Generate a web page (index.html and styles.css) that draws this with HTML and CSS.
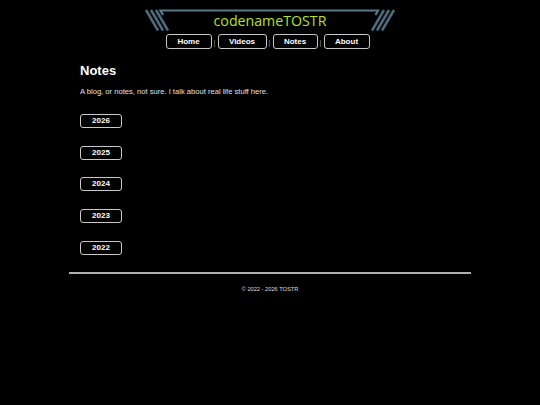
FILE: index.html
```html
<!DOCTYPE html>
<html lang="en">
<head>
<meta charset="utf-8">
<title>Notes - codenameTOSTR</title>
<link rel="stylesheet" href="styles.css">
</head>
<body>
<header class="header">
  <svg class="frame" viewBox="140 0 260 36" width="260" height="36" aria-hidden="true">
    <g stroke="#4e6b7e" stroke-width="2.5" fill="none" stroke-linecap="butt">
      <line x1="146" y1="10" x2="158" y2="30.5"/>
      <line x1="151" y1="10" x2="163" y2="30.5"/>
      <line x1="156" y1="10" x2="168" y2="30.5"/>
      <line x1="394" y1="10" x2="382" y2="30.5"/>
      <line x1="389" y1="10" x2="377" y2="30.5"/>
      <line x1="384" y1="10" x2="372" y2="30.5"/>
      <path d="M163 15 L160.5 10.5 L378 10.5 L375.5 15" stroke="#5a7789" stroke-width="2.2"/>
    </g>
  </svg>
  <div class="title">codenameTOSTR</div>
  <nav class="nav">
    <a class="btn w46" href="#">Home</a>
    <span class="sep">|</span>
    <a class="btn w49" href="#">Videos</a>
    <span class="sep">|</span>
    <a class="btn w45" href="#">Notes</a>
    <span class="sep">|</span>
    <a class="btn w46" href="#">About</a>
  </nav>
</header>
<main class="content">
  <h1 class="heading">Notes</h1>
  <p class="intro">A blog, or notes, not sure. I talk about real life stuff here.</p>
  <div class="years">
    <a class="year" href="#">2026</a>
    <a class="year" href="#">2025</a>
    <a class="year" href="#">2024</a>
    <a class="year" href="#">2023</a>
    <a class="year" href="#">2022</a>
  </div>
</main>
<footer class="footer">
  <hr class="rule">
  <p class="copy">© 2022 - 2026 TOSTR</p>
</footer>
</body>
</html>
```
FILE: styles.css
```css
html, body {
  margin: 0;
  padding: 0;
  background: #000;
  color: #fff;
  font-family: "Liberation Sans", Arial, sans-serif;
}

.header {
  position: relative;
  width: 260px;
  margin: 0 auto;
  padding-top: 12px;
}

.frame {
  position: absolute;
  left: 0;
  top: 0;
}

.title {
  position: relative;
  text-align: center;
  font-family: "Open Sans", "DejaVu Sans", sans-serif;
  font-size: 14.2px;
  line-height: 18px;
  color: #b6e01c;
}

.nav {
  display: flex;
  justify-content: center;
  align-items: flex-start;
  margin-top: 4px;
  padding-right: 5px;
}

.btn {
  box-sizing: border-box;
  height: 15px;
  border: 1px solid #c8c8c8;
  border-radius: 3px;
  color: #fff;
  text-decoration: none;
  font-weight: bold;
  font-size: 8px;
  line-height: 13px;
  text-align: center;
}

.w45 { width: 45px; }
.w46 { width: 46px; }
.w49 { width: 49px; }

.sep {
  width: 6px;
  color: #9a9a9a;
  font-size: 7px;
  line-height: 7px;
  padding-top: 5px;
  text-align: center;
}

.content {
  width: 380px;
  margin: 0 auto;
  padding: 0 11px;
}

.heading {
  margin: 14px 0 0;
  font-size: 13px;
  line-height: 15px;
  font-weight: bold;
}

.intro {
  margin: 9px 0 0;
  font-size: 7.6px;
  line-height: 10px;
  color: #e0e0e0;
}

.years {
  display: flex;
  flex-direction: column;
  align-items: flex-start;
  gap: 17.7px;
  margin-top: 17px;
}

.year {
  box-sizing: border-box;
  width: 42px;
  height: 14px;
  border: 1px solid #c8c8c8;
  border-radius: 3px;
  color: #fff;
  text-decoration: none;
  font-weight: bold;
  font-size: 8px;
  line-height: 12px;
  text-align: center;
}

.footer {
  width: 402px;
  margin: 0 auto;
  padding-top: 17px;
}

.rule {
  margin: 0;
  border: 0;
  height: 2px;
  background: #b0b0b0;
}

.copy {
  margin: 11px 0 0;
  text-align: center;
  font-size: 5.7px;
  line-height: 8px;
  color: #ddd;
}
```
